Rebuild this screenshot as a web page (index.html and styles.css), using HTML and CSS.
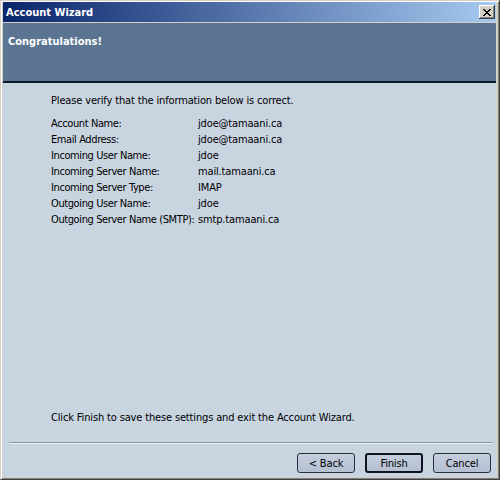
FILE: index.html
```html
<!DOCTYPE html>
<html>
<head>
<meta charset="utf-8">
<link rel="stylesheet" href="styles.css">
</head>
<body>
<div class="window">
  <div class="titlebar">
    <span class="title">Account Wizard</span>
    <button class="close" aria-label="Close">
      <svg width="8" height="7" viewBox="0 0 8 7"><path d="M0 0h2v1h1v1h2v-1h1v-1h2v1h-1v1h-1v1h-1v1h1v1h1v1h1v1h-2v-1h-1v-1h-2v1h-1v1h-2v-1h1v-1h1v-1h1v-1h-1v-1h-1z" fill="#000"/></svg>
    </button>
  </div>
  <div class="header">
    <h1 class="heading">Congratulations!</h1>
  </div>
  <div class="content">
    <p class="intro">Please verify that the information below is correct.</p>
    <div class="summary">
      <span class="label">Account Name:</span><span>jdoe@tamaani.ca</span>
      <span class="label">Email Address:</span><span>jdoe@tamaani.ca</span>
      <span class="label">Incoming User Name:</span><span>jdoe</span>
      <span class="label">Incoming Server Name:</span><span>mail.tamaani.ca</span>
      <span class="label">Incoming Server Type:</span><span>IMAP</span>
      <span class="label">Outgoing User Name:</span><span>jdoe</span>
      <span class="label">Outgoing Server Name (SMTP):</span><span>smtp.tamaani.ca</span>
    </div>
    <div class="spacer"></div>
    <p class="outro">Click Finish to save these settings and exit the Account Wizard.</p>
    <div class="separator"></div>
    <div class="buttons">
      <button class="btn">&lt; Back</button>
      <button class="btn default">Finish</button>
      <button class="btn">Cancel</button>
    </div>
  </div>
</div>
</body>
</html>
```
FILE: styles.css
```css
* { box-sizing: border-box; }
html, body { margin: 0; padding: 0; }
body {
  width: 500px;
  height: 480px;
  overflow: hidden;
  font-family: "DejaVu Sans Condensed", "DejaVu Sans", sans-serif;
  font-size: 11px;
  letter-spacing: -0.15px;
  color: #000;
}
.window {
  width: 500px;
  height: 480px;
  background: #d4d0c8;
  border-top: 1px solid #d4d0c8;
  border-left: 1px solid #d4d0c8;
  border-right: 1px solid #404040;
  border-bottom: 1px solid #404040;
  box-shadow: inset 1px 1px 0 #fff, inset -1px -1px 0 #808080;
  padding: 1px 3px 2px 2px;
  display: flex;
  flex-direction: column;
}
.titlebar {
  height: 20px;
  flex: none;
  background: linear-gradient(to right, #0a246a, #a6caf0);
  display: flex;
  align-items: center;
  justify-content: space-between;
  padding: 0 1px 0 3px;
}
.title {
  color: #fff;
  font-weight: bold;
  font-size: 11px;
  letter-spacing: 0;
}
.close {
  width: 16px;
  height: 14px;
  padding: 0;
  margin: 0;
  background: #d4d0c8;
  border: none;
  box-shadow: inset -1px -1px 0 #404040, inset 1px 1px 0 #fff, inset -2px -2px 0 #808080;
  display: flex;
  align-items: center;
  justify-content: center;
}
.header {
  flex: none;
  height: 60px;
  margin-top: 1px;
  background: #5a7492;
  border-bottom: 2px solid #0c1a2e;
  padding: 12px 5px 0 5px;
}
.heading {
  margin: 0;
  color: #fff;
  font-size: 11px;
  font-weight: bold;
  line-height: 14px;
  letter-spacing: 0;
}
.content {
  flex: 1;
  background: #c8d4e0;
  display: flex;
  flex-direction: column;
  padding: 10px 0 4px 48px;
}
.intro, .outro {
  margin: 0;
  line-height: 16px;
  white-space: nowrap;
}
.summary {
  margin-top: 7px;
  display: grid;
  grid-template-columns: 147px auto;
  line-height: 16px;
  white-space: nowrap;
}
.label {
  letter-spacing: -0.4px;
}
.spacer { flex: 1; }
.separator {
  margin: 16px 3px 0 -42px;
  height: 2px;
  border-top: 1px solid #8797ab;
  border-bottom: 1px solid #eef2f6;
}
.buttons {
  margin-top: 9px;
  display: flex;
  justify-content: flex-end;
  gap: 10px;
  padding-right: 5px;
}
.btn {
  width: 58px;
  height: 20px;
  padding: 0;
  font-family: inherit;
  font-size: 11px;
  letter-spacing: -0.15px;
  color: #000;
  background: linear-gradient(#c4cddc, #b4bfd2);
  border: 1px solid #2a2e3a;
  border-radius: 3px;
}
.btn.default {
  border-width: 2px;
  border-color: #101420;
}
```
